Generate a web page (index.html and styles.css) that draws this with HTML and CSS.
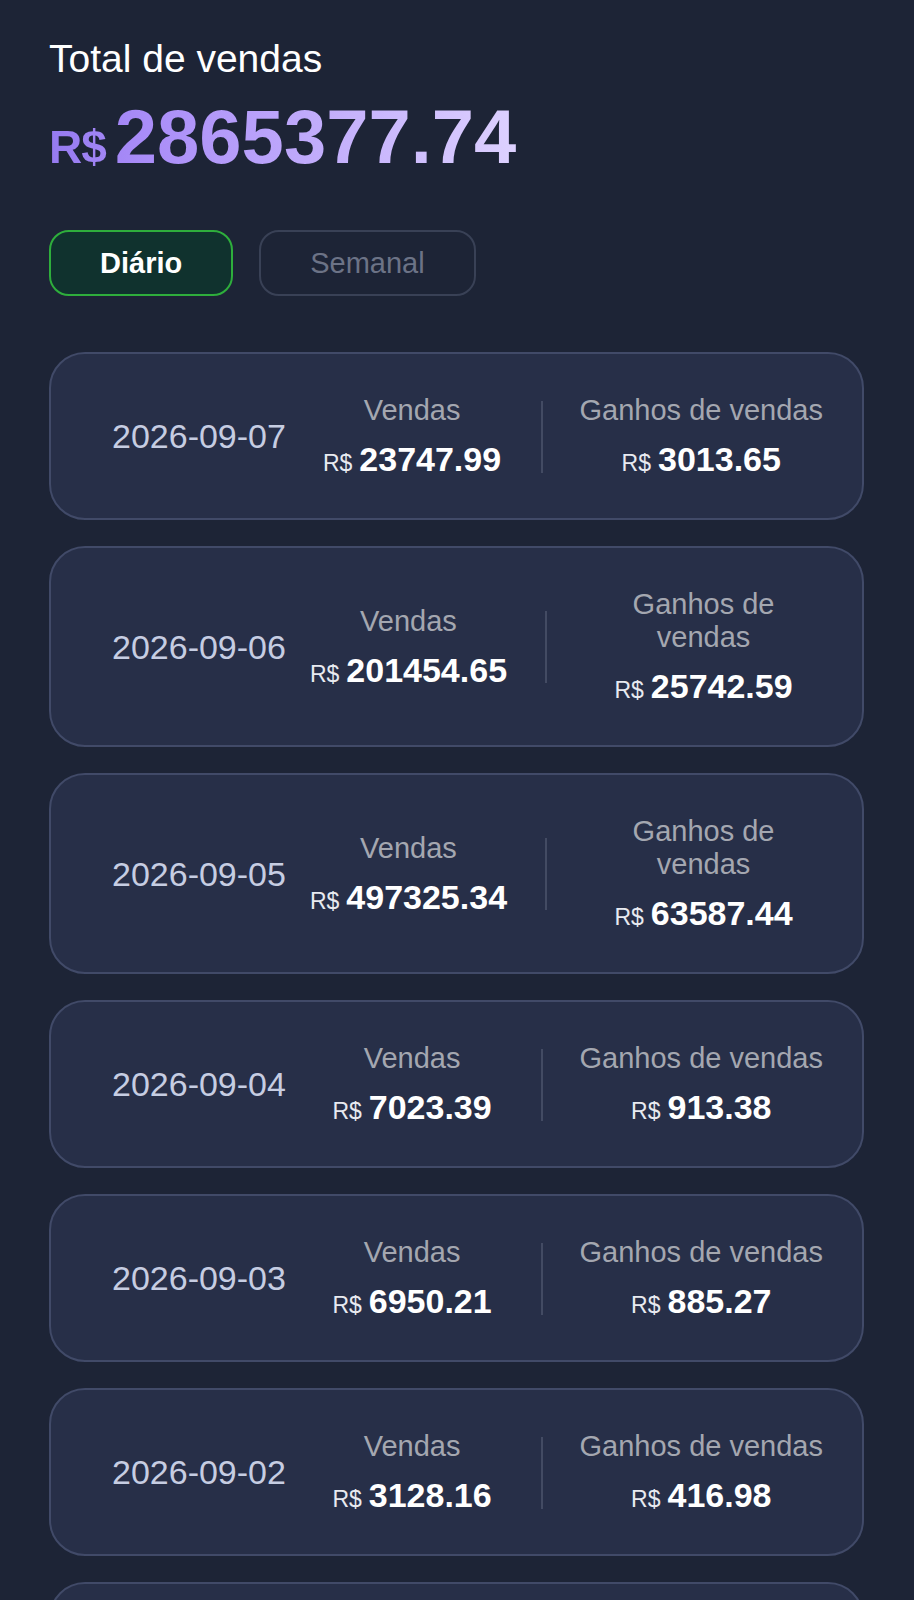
FILE: index.html
```html
<!DOCTYPE html>
<html lang="pt-BR">
<head>
<meta charset="utf-8">
<title>Total de vendas</title>
<link rel="stylesheet" href="styles.css">
</head>
<body>
<main class="page">
  <h1 class="title">Total de vendas</h1>
  <div class="total"><span class="total-cur">R$</span><span class="total-num">2865377.74</span></div>

  <div class="tabs">
    <button class="tab tab-active">Diário</button>
    <button class="tab">Semanal</button>
  </div>

  <div class="list">
    <div class="card">
      <div class="date">2026-09-07</div>
      <div class="stat stat-sales"><div class="label">Vendas</div><div class="value"><span class="cur">R$</span><span class="num">23747.99</span></div></div>
      <div class="divider"></div>
      <div class="stat stat-earn"><div class="label">Ganhos de vendas</div><div class="value"><span class="cur">R$</span><span class="num">3013.65</span></div></div>
    </div>
    <div class="card">
      <div class="date">2026-09-06</div>
      <div class="stat stat-sales"><div class="label">Vendas</div><div class="value"><span class="cur">R$</span><span class="num">201454.65</span></div></div>
      <div class="divider"></div>
      <div class="stat stat-earn"><div class="label">Ganhos de vendas</div><div class="value"><span class="cur">R$</span><span class="num">25742.59</span></div></div>
    </div>
    <div class="card">
      <div class="date">2026-09-05</div>
      <div class="stat stat-sales"><div class="label">Vendas</div><div class="value"><span class="cur">R$</span><span class="num">497325.34</span></div></div>
      <div class="divider"></div>
      <div class="stat stat-earn"><div class="label">Ganhos de vendas</div><div class="value"><span class="cur">R$</span><span class="num">63587.44</span></div></div>
    </div>
    <div class="card">
      <div class="date">2026-09-04</div>
      <div class="stat stat-sales"><div class="label">Vendas</div><div class="value"><span class="cur">R$</span><span class="num">7023.39</span></div></div>
      <div class="divider"></div>
      <div class="stat stat-earn"><div class="label">Ganhos de vendas</div><div class="value"><span class="cur">R$</span><span class="num">913.38</span></div></div>
    </div>
    <div class="card">
      <div class="date">2026-09-03</div>
      <div class="stat stat-sales"><div class="label">Vendas</div><div class="value"><span class="cur">R$</span><span class="num">6950.21</span></div></div>
      <div class="divider"></div>
      <div class="stat stat-earn"><div class="label">Ganhos de vendas</div><div class="value"><span class="cur">R$</span><span class="num">885.27</span></div></div>
    </div>
    <div class="card">
      <div class="date">2026-09-02</div>
      <div class="stat stat-sales"><div class="label">Vendas</div><div class="value"><span class="cur">R$</span><span class="num">3128.16</span></div></div>
      <div class="divider"></div>
      <div class="stat stat-earn"><div class="label">Ganhos de vendas</div><div class="value"><span class="cur">R$</span><span class="num">416.98</span></div></div>
    </div>
    <div class="card">
      <div class="date">2026-09-01</div>
      <div class="stat stat-sales"><div class="label">Vendas</div><div class="value"><span class="cur">R$</span><span class="num">5412.80</span></div></div>
      <div class="divider"></div>
      <div class="stat stat-earn"><div class="label">Ganhos de vendas</div><div class="value"><span class="cur">R$</span><span class="num">702.66</span></div></div>
    </div>
  </div>
</main>
</body>
</html>
```

FILE: styles.css
```css
html, body {
  margin: 0;
  padding: 0;
  background: #1d2436;
}

body {
  font-family: "Liberation Sans", Arial, Helvetica, sans-serif;
  color: #ffffff;
}

.page {
  padding: 37px 50px 0 49px;
}

.title {
  margin: 0;
  font-size: 39px;
  line-height: 44px;
  font-weight: 400;
  color: #ffffff;
}

.total {
  display: flex;
  align-items: baseline;
  width: max-content;
  margin-top: 18px;
  line-height: 1;
  font-weight: 700;
  background: linear-gradient(90deg, #957af0 0%, #a98cf8 20%, #ddd1ff 100%);
  -webkit-background-clip: text;
  background-clip: text;
  color: transparent;
}

.total-cur {
  font-size: 46px;
  letter-spacing: -1px;
  margin-right: 9px;
}

.total-num {
  font-size: 76px;
}

.tabs {
  display: flex;
  gap: 26px;
  margin-top: 55px;
}

.tab {
  font-family: inherit;
  font-size: 29px;
  line-height: 34px;
  padding: 14px 49px;
  border: 2px solid #394156;
  border-radius: 20px;
  background: transparent;
  color: #6c7386;
  font-weight: 400;
}

.tab-active {
  border-color: #2eae3c;
  background: #10322e;
  color: #ffffff;
  font-weight: 700;
}

.list {
  display: flex;
  flex-direction: column;
  gap: 26px;
  margin-top: 56px;
}

.card {
  display: flex;
  align-items: center;
  padding: 40px 39px 39px 61px;
  border: 2px solid #414a68;
  border-radius: 36px;
  background: #272f48;
}

.date {
  flex: 1 0 auto;
  margin-right: 24px;
  font-size: 34px;
  line-height: 39px;
  color: #c6cde2;
  white-space: nowrap;
}

.stat {
  text-align: center;
}

.stat-sales {
  flex: none;
  min-width: 181px;
}

.stat-earn {
  flex: 0 1 auto;
  min-width: 0;
}

.label {
  font-size: 29px;
  line-height: 33px;
  color: #a4a7b0;
}

.value {
  margin-top: 13px;
  font-size: 34px;
  line-height: 39px;
  white-space: nowrap;
}

.cur {
  font-size: 23px;
  line-height: 1;
  color: #e8eaf0;
  margin-right: 7px;
}

.num {
  font-weight: 700;
  line-height: 1;
  color: #ffffff;
}

.divider {
  flex: none;
  width: 2px;
  height: 72px;
  margin: 0 37px 0 38px;
  background: #434b63;
}
```
